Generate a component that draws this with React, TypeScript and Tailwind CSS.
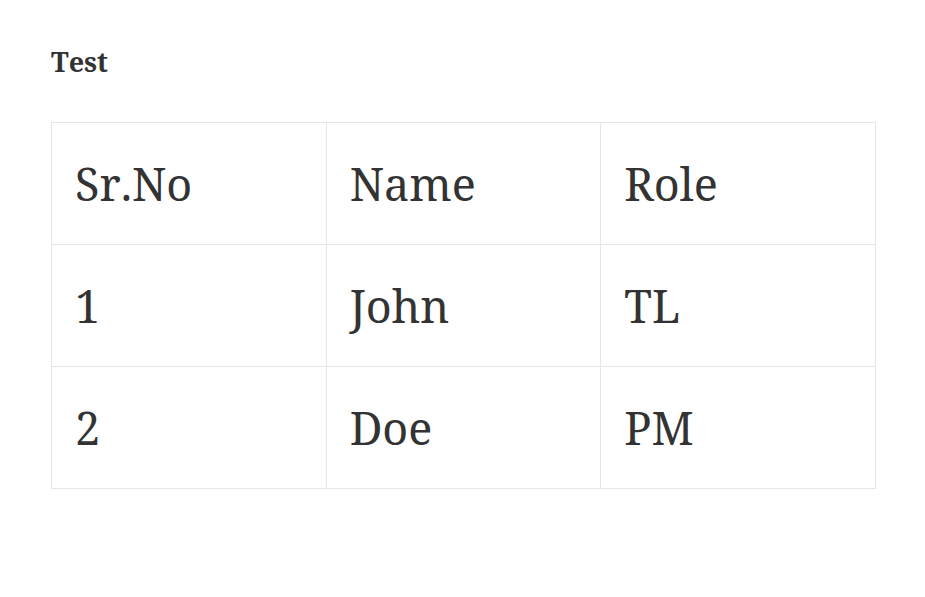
const rows = [
  ["Sr.No", "Name", "Role"],
  ["1", "John", "TL"],
  ["2", "Doe", "PM"],
];

export default function App() {
  return (
    <div
      className="min-h-[597px] bg-white pl-[51px] pt-[44px] text-[#333] [font-kerning:none]"
      style={{ fontFamily: '"Noto Serif", "DejaVu Serif", serif' }}
    >
      <h2 className="text-[27px] font-bold leading-[36px]">Test</h2>

      <table className="mt-[42px] w-[825px] table-fixed border-collapse">
        <tbody>
          {rows.map((row, i) => (
            <tr key={i}>
              {row.map((cell, j) => (
                <td
                  key={j}
                  className="h-[122px] border border-[#e6e6e6] px-[23px] align-middle text-[45px] leading-[60px]"
                >
                  {cell}
                </td>
              ))}
            </tr>
          ))}
        </tbody>
      </table>
    </div>
  );
}
